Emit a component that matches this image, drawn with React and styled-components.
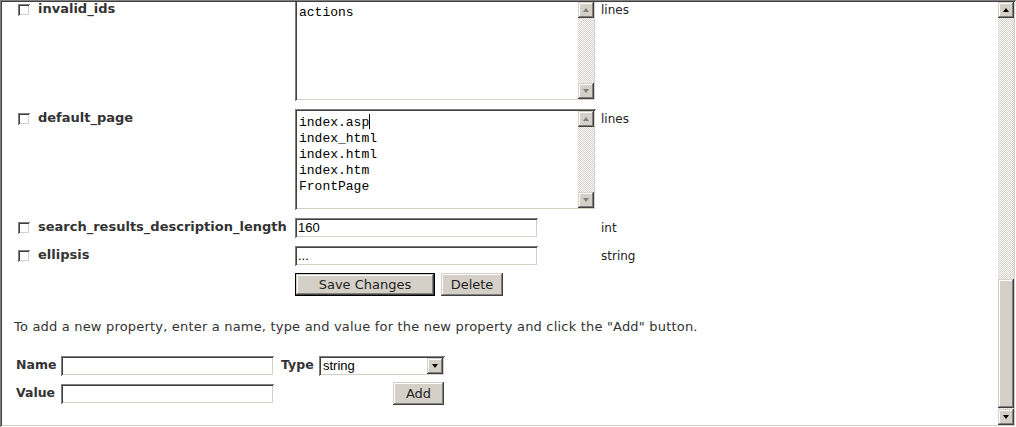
import React from "react";
import styled, { createGlobalStyle, css } from "styled-components";

const Global = createGlobalStyle`
  html, body { margin: 0; padding: 0; background: #fff; }
  body { font-family: "DejaVu Sans", Verdana, sans-serif; }
  * { box-sizing: border-box; }
`;

const raised = css`
  background: #d4d0c8;
  box-shadow: inset -1px -1px #404040, inset 1px 1px #d4d0c8,
    inset -2px -2px #808080, inset 2px 2px #fff;
`;

const sunken = css`
  background: #fff;
  box-shadow: inset 1px 1px #808080, inset -1px -1px #fff,
    inset 2px 2px #404040, inset -2px -2px #d4d0c8;
`;

const Frame = styled.div`
  width: 1016px;
  height: 427px;
  display: flex;
  padding: 2px;
  ${sunken}
  overflow: hidden;
`;

const Viewport = styled.div`
  flex: 1;
  overflow: hidden;
`;

const Content = styled.div`
  margin-top: -2px;
  padding-left: 16px;
`;

const PropGrid = styled.div`
  display: grid;
  grid-template-columns: 20px 257px 301px auto;
  row-gap: 8px;
  align-items: start;
`;

const Check = styled.span`
  display: block;
  width: 12px;
  height: 12px;
  margin-top: 4px;
  ${sunken}
`;

const PropLabel = styled.div`
  font-weight: bold;
  font-size: 13px;
  line-height: 16px;
  color: #333;
  white-space: nowrap;
  padding-top: 1px;
`;

const TypeText = styled.div`
  font-size: 12px;
  line-height: 15px;
  color: #222;
  padding-left: 5px;
  padding-top: 3px;
`;

const TextBox = styled.div`
  width: 301px;
  height: 101px;
  display: flex;
  padding: 2px;
  ${sunken}
`;

const TextLines = styled.div`
  flex: 1;
  padding: 3px 2px 2px;
  font-family: "Liberation Mono", "Courier New", monospace;
  font-size: 13px;
  line-height: 16px;
  color: #000;
  white-space: pre;
  overflow: hidden;
`;

const Caret = styled.span`
  display: inline-block;
  width: 1px;
  height: 15px;
  background: #000;
  vertical-align: -3px;
`;

const Bar = styled.div`
  width: 16px;
  display: flex;
  flex-direction: column;
  height: ${(p) => p.$h || "auto"};
`;

const Track = styled.div`
  flex: 1;
  background: repeating-conic-gradient(#d4d0c8 0 25%, #fff 0 50%) 0 0 / 2px 2px;
  display: flex;
  flex-direction: column;
`;

const Thumb = styled.div`
  ${raised}
  height: ${(p) => p.$h}px;
  margin-top: ${(p) => p.$top}px;
`;

const ArrowBtn = styled.div`
  ${raised}
  width: 16px;
  height: 16px;
  flex: none;
  display: flex;
  align-items: center;
  justify-content: center;
`;

const Tri = styled.span`
  width: 0;
  height: 0;
  border-left: 3.5px solid transparent;
  border-right: 3.5px solid transparent;
  ${(p) =>
    p.$up
      ? css`border-bottom: 4px solid ${p.$dim ? "#808080" : "#000"};`
      : css`border-top: 4px solid ${p.$dim ? "#808080" : "#000"};`}
`;

const Arrow = ({ up, dim }) => (
  <ArrowBtn>
    <Tri $up={up} $dim={dim} />
  </ArrowBtn>
);

const Input = styled.div`
  ${sunken}
  width: ${(p) => p.$w}px;
  height: 20px;
  padding: 2px 3px;
  font-family: "Liberation Sans", Arial, sans-serif;
  font-size: 13px;
  line-height: 16px;
  color: #000;
  white-space: nowrap;
  overflow: hidden;
`;

const ButtonRow = styled.div`
  grid-column: 3 / 5;
  display: flex;
  gap: 6px;
  margin-top: -1px;
`;

const Button = styled.div`
  ${raised}
  height: 23px;
  width: ${(p) => p.$w}px;
  display: flex;
  align-items: center;
  justify-content: center;
  font-size: 13px;
  color: #222;
  ${(p) =>
    p.$default &&
    css`
      box-shadow: inset 0 0 0 1px #000, inset -2px -2px #404040,
        inset 2px 2px #d4d0c8, inset -3px -3px #808080, inset 3px 3px #fff;
    `}
`;

const Note = styled.p`
  margin: 23px 0 0 -4px;
  font-size: 13px;
  letter-spacing: 0.19px;
  line-height: 15px;
  color: #333;
  white-space: nowrap;
`;

const AddForm = styled.div`
  margin: 22px 0 0 -2px;
  display: grid;
  grid-template-columns: 45px 213px 45px 125px;
  row-gap: 6px;
  align-items: center;
`;

const FormLabel = styled.div`
  font-weight: bold;
  font-size: 12.5px;
  line-height: 15px;
  color: #333;
  margin-top: -3px;
  padding-left: ${(p) => p.$pl || 0}px;
`;

const Select = styled.div`
  ${sunken}
  width: 126px;
  height: 20px;
  padding: 2px;
  display: flex;
  align-items: stretch;
`;

const SelectValue = styled.div`
  flex: 1;
  padding-left: 2px;
  font-family: "Liberation Sans", Arial, sans-serif;
  font-size: 13px;
  line-height: 16px;
  color: #000;
`;

const RightCell = styled.div`
  display: flex;
  justify-content: flex-end;
`;

function TextArea({ lines, caretAt }) {
  return (
    <TextBox>
      <TextLines>
        {lines.map((l, i) => (
          <div key={i}>
            {l}
            {i === caretAt && <Caret />}
          </div>
        ))}
      </TextLines>
      <Bar>
        <Arrow up dim />
        <Track />
        <Arrow dim />
      </Bar>
    </TextBox>
  );
}

export default function App() {
  return (
    <>
      <Global />
      <Frame>
        <Viewport>
          <Content>
            <PropGrid>
              <Check />
              <PropLabel>invalid_ids</PropLabel>
              <TextArea lines={["actions"]} />
              <TypeText>lines</TypeText>

              <Check />
              <PropLabel>default_page</PropLabel>
              <TextArea
                lines={["index.asp", "index_html", "index.html", "index.htm", "FrontPage"]}
                caretAt={0}
              />
              <TypeText>lines</TypeText>

              <Check />
              <PropLabel>search_results_description_length</PropLabel>
              <Input $w={243}>160</Input>
              <TypeText>int</TypeText>

              <Check />
              <PropLabel>ellipsis</PropLabel>
              <Input $w={243}>...</Input>
              <TypeText>string</TypeText>

              <div />
              <div />
              <ButtonRow>
                <Button $w={140} $default>Save Changes</Button>
                <Button $w={62}>Delete</Button>
              </ButtonRow>
            </PropGrid>

            <Note>
              To add a new property, enter a name, type and value for the new
              property and click the "Add" button.
            </Note>

            <AddForm>
              <FormLabel>Name</FormLabel>
              <Input $w={213} />
              <FormLabel $pl={7}>Type</FormLabel>
              <Select>
                <SelectValue>string</SelectValue>
                <Arrow />
              </Select>

              <FormLabel>Value</FormLabel>
              <Input $w={213} />
              <div />
              <RightCell>
                <Button $w={51}>Add</Button>
              </RightCell>
            </AddForm>
          </Content>
        </Viewport>
        <Bar $h="423px">
          <Arrow up />
          <Track>
            <Thumb $top={261} $h={129} />
          </Track>
          <Arrow />
        </Bar>
      </Frame>
    </>
  );
}
